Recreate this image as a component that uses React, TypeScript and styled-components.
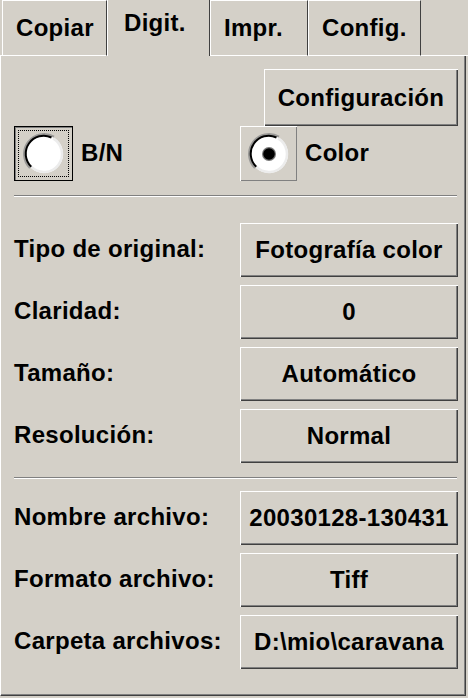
import styled, { createGlobalStyle } from "styled-components";

// classic win2k grey look
const GlobalStyle = createGlobalStyle`
  html, body {
    margin: 0;
    padding: 0;
    background: #d4d0c8;
  }
  body {
    font-family: "Liberation Sans", Arial, sans-serif;
    font-weight: bold;
    font-size: 24px;
    letter-spacing: 0.3px;
    color: #000;
  }
`;

const Screen = styled.div`
  width: 468px;
  height: 698px;
  overflow: hidden;
  background: #d4d0c8;
`;

// tabs
const TabBar = styled.div`
  display: flex;
  height: 56px;
`;

const TabGap = styled.div<{ $w?: number }>`
  box-sizing: border-box;
  height: 56px;
  border-bottom: 1px solid #fff;
  ${(p) => (p.$w ? `width: ${p.$w}px;` : "flex: 1;")}
`;

const Tab = styled.div<{ $w: number; $active?: boolean }>`
  box-sizing: border-box;
  width: ${(p) => p.$w}px;
  height: 56px;
  line-height: 26px;
  white-space: nowrap;
  padding: ${(p) => (p.$active ? "10px 0 0 16px" : "14px 0 0 13px")};
  border-left: 1px solid #fff;
  border-right: 1px solid #404040;
  border-top: ${(p) => (p.$active ? "none" : "1px solid #fff")};
  border-bottom: ${(p) => (p.$active ? "none" : "1px solid #fff")};
`;

// panel under the tabs
const Panel = styled.div`
  box-sizing: border-box;
  width: 466px;
  height: 640px;
  padding: 13px 7px 0 13px;
  border-left: 1px solid #fff;
  border-right: 1px solid #404040;
  border-bottom: 1px solid #404040;
  box-shadow: inset -1px -1px #808080;
`;

const TopRow = styled.div`
  display: flex;
  justify-content: flex-end;
`;

const RaisedButton = styled.button<{ $w?: number; $h?: number }>`
  box-sizing: border-box;
  width: ${(p) => (p.$w ? `${p.$w}px` : "100%")};
  height: ${(p) => p.$h ?? 54}px;
  padding: 0;
  border: none;
  background: #d4d0c8;
  box-shadow: inset 1px 1px #fff, inset -1px -1px #404040,
    inset -2px -2px #808080;
  font: inherit;
  letter-spacing: inherit;
  color: #000;
  white-space: nowrap;
  text-align: center;
`;

const ModeRow = styled.div`
  display: grid;
  grid-template-columns: 226px 1fr;
  height: 55px;
`;

const ModeOption = styled.div`
  display: flex;
  align-items: center;
  gap: 8px;
`;

const RadioBox = styled.div<{ $w: number; $pressed?: boolean }>`
  box-sizing: border-box;
  width: ${(p) => p.$w}px;
  height: 55px;
  display: flex;
  align-items: center;
  justify-content: center;
  box-shadow: ${(p) =>
    p.$pressed
      ? "inset 0 0 0 1px #000, inset 2px 2px #808080"
      : "inset 1px 1px #fff, inset -1px -1px #808080"};
  outline: ${(p) => (p.$pressed ? "1px dotted #000" : "none")};
  outline-offset: -5px;
`;

const Separator = styled.div<{ $top: number; $bottom: number }>`
  height: 0;
  margin: ${(p) => `${p.$top}px 1px ${p.$bottom}px 0`};
  border-top: 1px solid #808080;
  border-bottom: 1px solid #fff;
`;

const FieldList = styled.div`
  display: grid;
  gap: 8px;
`;

const Field = styled.div`
  display: grid;
  grid-template-columns: 226px 218px;
  align-items: center;
  height: 54px;
`;

const Label = styled.span`
  white-space: nowrap;
  margin-top: -2px;
`;

const RadioGlyph = ({ checked }: { checked?: boolean }) => (
  <svg width="44" height="44" viewBox="0 0 44 44">
    <circle cx="22" cy="22" r="19" fill="#fff" />
    <path
      d="M9.27 34.73 A18 18 0 1 0 31 6.41"
      fill="none"
      stroke="#ececec"
      strokeWidth="2.5"
    />
    <path
      d="M32 4.68 A20 20 0 0 0 7.86 36.14"
      fill="none"
      stroke="#8a8a8a"
      strokeWidth="2"
      opacity="0.8"
    />
    <path
      d="M29.5 5.5 A18 18 0 0 0 9.27 34.73"
      fill="none"
      stroke="#000"
      strokeWidth="2"
    />
    {checked && (
      <>
        <circle cx="22" cy="22" r="7" fill="#777" />
        <circle cx="22" cy="22" r="5.8" fill="#000" />
      </>
    )}
  </svg>
);

const fieldsA = [
  ["Tipo de original:", "Fotografía color"],
  ["Claridad:", "0"],
  ["Tamaño:", "Automático"],
  ["Resolución:", "Normal"],
];

const fieldsB = [
  ["Nombre archivo:", "20030128-130431"],
  ["Formato archivo:", "Tiff"],
  ["Carpeta archivos:", "D:\\mio\\caravana"],
];

const App = () => {
  return (
    <Screen>
      <GlobalStyle />
      <TabBar>
        <TabGap $w={2} />
        <Tab $w={105}>Copiar</Tab>
        <Tab $w={103} $active>
          Digit.
        </Tab>
        <Tab $w={98}>Impr.</Tab>
        <Tab $w={113}>Config.</Tab>
        <TabGap />
      </TabBar>
      <Panel>
        <TopRow>
          <RaisedButton $w={194} $h={57}>
            Configuración
          </RaisedButton>
        </TopRow>
        <ModeRow>
          <ModeOption>
            <RadioBox $w={59} $pressed>
              <RadioGlyph />
            </RadioBox>
            <Label>B/N</Label>
          </ModeOption>
          <ModeOption>
            <RadioBox $w={57}>
              <RadioGlyph checked />
            </RadioBox>
            <Label>Color</Label>
          </ModeOption>
        </ModeRow>
        <Separator $top={14} $bottom={26} />
        <FieldList>
          {fieldsA.map(([label, value]) => (
            <Field key={label}>
              <Label>{label}</Label>
              <RaisedButton>{value}</RaisedButton>
            </Field>
          ))}
        </FieldList>
        <Separator $top={14} $bottom={12} />
        <FieldList>
          {fieldsB.map(([label, value]) => (
            <Field key={label}>
              <Label>{label}</Label>
              <RaisedButton>{value}</RaisedButton>
            </Field>
          ))}
        </FieldList>
      </Panel>
    </Screen>
  );
};

export default App;
